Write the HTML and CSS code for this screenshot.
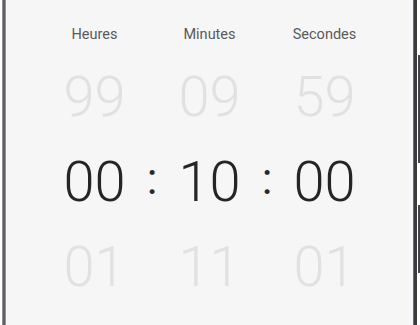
FILE: index.html
```html
<!DOCTYPE html>
<html lang="fr">
<head>
<meta charset="utf-8">
<link rel="stylesheet" href="styles.css">
</head>
<body>
<div class="device">
  <div class="bezel-left"></div>
  <main class="screen">
    <div class="picker">
      <div class="label">Heures</div>
      <div></div>
      <div class="label">Minutes</div>
      <div></div>
      <div class="label">Secondes</div>

      <div class="num faded">99</div>
      <div></div>
      <div class="num faded">09</div>
      <div></div>
      <div class="num faded">59</div>

      <div class="num active">00</div>
      <div class="colon">:</div>
      <div class="num active">10</div>
      <div class="colon">:</div>
      <div class="num active">00</div>

      <div class="num faded">01</div>
      <div></div>
      <div class="num faded">11</div>
      <div></div>
      <div class="num faded">01</div>
    </div>
  </main>
  <div class="bezel-right"></div>
  <div class="buttons">
    <div class="btn btn-power"></div>
    <div class="btn btn-vol"></div>
  </div>
</div>
</body>
</html>
```

FILE: styles.css
```css
html, body {
  margin: 0;
  padding: 0;
  background: #ffffff;
}
body {
  width: 420px;
  height: 325px;
  overflow: hidden;
  font-family: Roboto, "Noto Sans", sans-serif;
}
.device {
  display: flex;
  height: 325px;
}
.bezel-left {
  width: 4px;
  margin-left: 2px;
  background: linear-gradient(to right, #a4a4aa, #5a5a62 40%, #60606a 70%, #b8b8be);
}
.screen {
  width: 407px;
  background: #f6f6f6;
  padding-top: 25px;
  box-sizing: border-box;
}
.bezel-right {
  width: 4px;
  background: linear-gradient(to right, #8a8a90, #3a3a40 35%, #34343a 80%, #4a4a50);
}
.buttons {
  width: 2px;
  margin-left: 1px;
  display: flex;
  flex-direction: column;
}
.btn {
  width: 2px;
  background: #45454b;
}
.btn-power {
  margin-top: 55px;
  height: 108px;
}
.btn-vol {
  margin-top: 42px;
  height: 68px;
}
.picker {
  display: grid;
  grid-template-columns: 80px 35px 80px 35px 80px;
  grid-template-rows: 30px 85px 85px 85px;
  justify-content: center;
}
.label {
  align-self: start;
  font-size: 14.5px;
  line-height: 20px;
  color: #5a5a5a;
  text-align: center;
  white-space: nowrap;
}
.num {
  font-size: 56px;
  font-weight: 300;
  line-height: 85px;
  text-align: center;
}
.faded {
  color: #e1e1e1;
}
.active {
  color: #252525;
}
.colon {
  font-size: 44px;
  font-weight: 400;
  line-height: 78px;
  text-align: center;
  color: #2a2a2a;
}
```
